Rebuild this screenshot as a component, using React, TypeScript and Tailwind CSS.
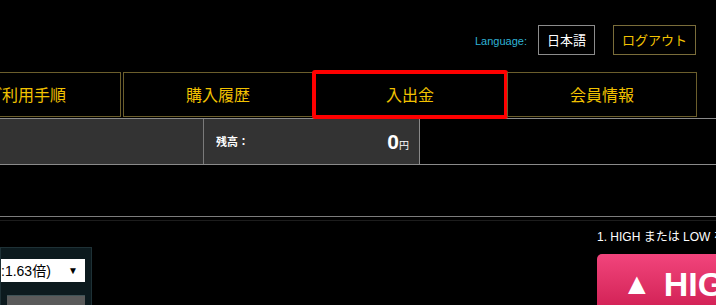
import React from "react";

const navItems = ["ご利用手順", "購入履歴", "入出金", "会員情報"];

function NavCell({ label, marked = false }: { label: string; marked?: boolean }) {
  return (
    <div className="relative flex h-[45px] w-[190px] shrink-0 items-center justify-center border border-[#6b5e2c] pb-[2px] text-[16px] text-[#f2c200]">
      {label}
      {marked && (
        <div className="pointer-events-none absolute inset-x-[-4px] inset-y-[-3px] rounded-[3px] border-[4px] border-[#ff0000]" />
      )}
    </div>
  );
}

export default function App() {
  return (
    <div
      className="relative h-[305px] w-[716px] overflow-hidden bg-black"
      style={{ fontFamily: '"Noto Sans CJK JP", "Liberation Sans", sans-serif' }}
    >
      {/* header */}
      <div className="flex h-[72px] items-start justify-end pr-[20px] pt-[25px]">
        <span className="mt-[8px] font-['Liberation_Sans'] text-[11px] text-[#2fb3d6]">
          Language:
        </span>
        <button className="ml-[11px] h-[30px] w-[57px] border border-[#8c8c8c] text-[13px] text-white">
          日本語
        </button>
        <button className="ml-[18px] h-[30px] w-[83px] border border-[#7a6d3a] text-[13px] text-[#f2c200]">
          ログアウト
        </button>
      </div>

      {/* main nav */}
      <div className="ml-[-69px] flex gap-[2px]">
        {navItems.map((item, i) => (
          <NavCell key={item} label={item} marked={i === 2} />
        ))}
      </div>

      {/* balance bar */}
      <div className="mt-[1px] flex h-[47px] border-y border-[#8a8a8a]">
        <div className="w-[204px] border-r border-[#7a7a7a] bg-[#333333]" />
        <div className="flex w-[216px] items-center justify-between border-r border-[#8a8a8a] bg-[#333333] pl-[12px] pr-[10px]">
          <span className="text-[11px] font-bold text-white">残高：</span>
          <span className="flex items-baseline text-white">
            <span className="font-['Liberation_Sans'] text-[21px] font-bold leading-none">0</span>
            <span className="text-[10px]">円</span>
          </span>
        </div>
        <div className="flex-1 bg-black" />
      </div>

      {/* separator */}
      <div className="mt-[51px] h-[1px] bg-[#7c7c7c]" />
      <div className="mt-[3px] h-[1px] bg-[#1c1c1c]" />

      {/* bottom row */}
      <div className="flex">
        <div className="mt-[26px] h-[60px] w-[92px] shrink-0 border border-[#1e3136] bg-[#0c1a1e] pr-[6px] pt-[11px]">
          <div className="flex h-[23px] items-center justify-between whitespace-nowrap bg-white pr-[7px] font-['Liberation_Sans'] text-[14px] text-black">
            <span>
              :1.63<span className="font-['Noto_Sans_CJK_JP']">倍</span>)
            </span>
            <span className="text-[10px]">▼</span>
          </div>
          <div className="mt-[13px] ml-[6px] h-[12px] border-t border-[#3f5256] bg-[#5a5a5a]" />
        </div>
        <div className="ml-[505px] mt-[7px] flex shrink-0 flex-col">
          <span className="whitespace-nowrap font-['Liberation_Sans'] text-[12px] leading-[15px] text-white">
            1. HIGH <span className="font-['Noto_Sans_CJK_JP']">または</span> LOW <span className="font-['Noto_Sans_CJK_JP']">を選択</span>
          </span>
          <div className="mt-[9px] flex h-[70px] w-[200px] items-start rounded-[5px] bg-gradient-to-b from-[#f2447c] to-[#c8104a] pl-[25px] pt-[10px] font-['Liberation_Sans'] text-[34px] font-bold text-white">
            <span className="mr-[12px] text-[30px] leading-[40px]">▲</span>
            <span className="leading-[40px]">HIGH</span>
          </div>
        </div>
      </div>
    </div>
  );
}
